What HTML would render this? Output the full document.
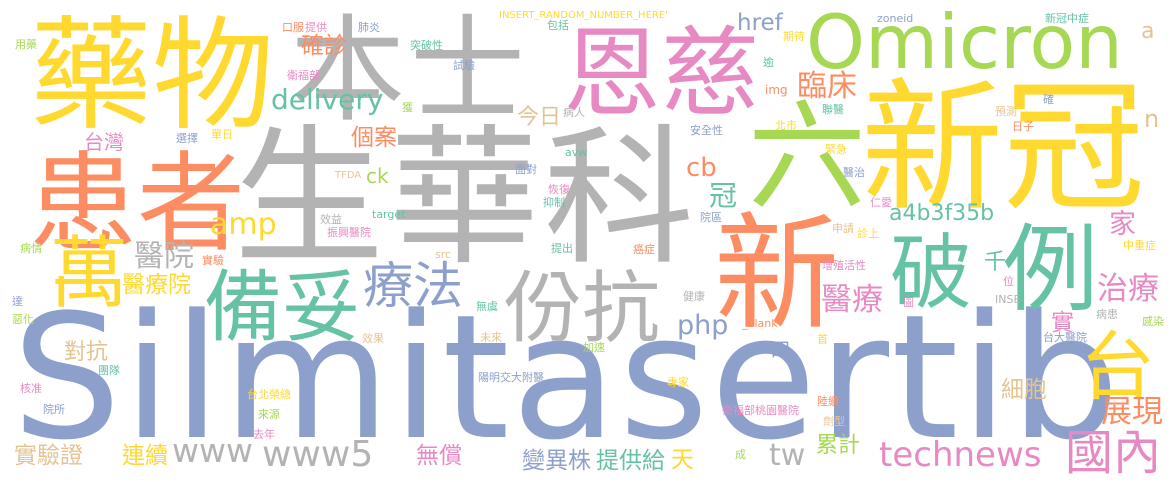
<!DOCTYPE html>
<html><head><meta charset="utf-8"><style>
html,body{margin:0;padding:0;background:#fff;}
#c{position:relative;width:1175px;height:482px;overflow:hidden;background:#fff;}
.w{position:absolute;line-height:1;white-space:nowrap;font-family:"Noto Sans CJK TC","Liberation Sans",sans-serif;}
.l{font-family:"DejaVu Sans","Liberation Sans",sans-serif;}
.s{font-size:11px;}
.G{color:#66c2a5}.O{color:#fc8d62}.B{color:#8da0cb}.P{color:#e78ac3}.L{color:#a6d854}.Y{color:#ffd92f}.T{color:#e5c494}.R{color:#b3b3b3}
</style></head><body><div id="c">
<span class="w R" style="left:234px;top:111px;font-size:150px;letter-spacing:5px">生華科</span>
<span class="w l B" style="left:12px;top:292px;font-size:172px;letter-spacing:2px">Silmitasertib</span>
<span class="w Y" style="left:30px;top:5px;font-size:122px">藥物</span>
<span class="w R" style="left:290px;top:4px;font-size:115px;letter-spacing:5px">本士</span>
<span class="w P" style="left:563px;top:16px;font-size:98px">恩慈</span>
<span class="w l L" style="left:806px;top:5px;font-size:75px">Omicron</span>
<span class="w Y" style="left:861px;top:64px;font-size:142px">新冠</span>
<span class="w L" style="left:748px;top:88px;font-size:118px">六</span>
<span class="w O" style="left:714px;top:200px;font-size:125px">新</span>
<span class="w O" style="left:29px;top:141px;font-size:108px">患者</span>
<span class="w Y" style="left:50px;top:228px;font-size:78px">萬</span>
<span class="w G" style="left:204px;top:262px;font-size:78px">備妥</span>
<span class="w B" style="left:363px;top:257px;font-size:50px">療法</span>
<span class="w R" style="left:504px;top:263px;font-size:78px">份抗</span>
<span class="w G" style="left:890px;top:225px;font-size:82px">破</span>
<span class="w G" style="left:1003px;top:214px;font-size:95px">例</span>
<span class="w Y" style="left:1080px;top:323px;font-size:75px">台</span>
<span class="w P" style="left:1065px;top:424px;font-size:48px">國內</span>
<span class="w O" style="left:1101px;top:393px;font-size:31px">展現</span>
<span class="w P" style="left:1097px;top:270px;font-size:31px">治療</span>
<span class="w P" style="left:821px;top:281px;font-size:31px">醫療</span>
<span class="w P" style="left:1109px;top:208px;font-size:27px">家</span>
<span class="w G" style="left:984px;top:249px;font-size:22px">千</span>
<span class="w P" style="left:1051px;top:309px;font-size:23px">實</span>
<span class="w T" style="left:1001px;top:376px;font-size:23px">細胞</span>
<span class="w L" style="left:816px;top:432px;font-size:22px">累計</span>
<span class="w O" style="left:797px;top:68px;font-size:30px">臨床</span>
<span class="w O" style="left:351px;top:124px;font-size:23px">個案</span>
<span class="w O" style="left:301px;top:32px;font-size:23px">確診</span>
<span class="w P" style="left:84px;top:131px;font-size:20px">台灣</span>
<span class="w R" style="left:134px;top:238px;font-size:30px">醫院</span>
<span class="w Y" style="left:122px;top:271px;font-size:23px">醫療院</span>
<span class="w T" style="left:64px;top:339px;font-size:22px">對抗</span>
<span class="w T" style="left:14px;top:442px;font-size:23px">實驗證</span>
<span class="w Y" style="left:122px;top:442px;font-size:23px">連續</span>
<span class="w T" style="left:517px;top:104px;font-size:22px">今日</span>
<span class="w G" style="left:709px;top:180px;font-size:28px">冠</span>
<span class="w P" style="left:416px;top:442px;font-size:23px">無償</span>
<span class="w B" style="left:522px;top:447px;font-size:23px">變異株</span>
<span class="w G" style="left:596px;top:447px;font-size:23px">提供給</span>
<span class="w Y" style="left:671px;top:446px;font-size:23px">天</span>
<span class="w B" style="left:771px;top:339px;font-size:19px">四</span>
<span class="w l P" style="left:879px;top:438px;font-size:34px">technews</span>
<span class="w l G" style="left:889px;top:203px;font-size:22px">a4b3f35b</span>
<span class="w l G" style="left:271px;top:86px;font-size:28px">delivery</span>
<span class="w l Y" style="left:210px;top:210px;font-size:30px">amp</span>
<span class="w l O" style="left:686px;top:155px;font-size:26px">cb</span>
<span class="w l B" style="left:737px;top:12px;font-size:23px">href</span>
<span class="w l L" style="left:366px;top:166px;font-size:20px">ck</span>
<span class="w l B" style="left:677px;top:312px;font-size:27px">php</span>
<span class="w l R" style="left:769px;top:441px;font-size:30px">tw</span>
<span class="w l R" style="left:172px;top:434px;font-size:33px">www</span>
<span class="w l R" style="left:262px;top:437px;font-size:36px">www5</span>
<span class="w l T" style="left:1141px;top:21px;font-size:22px">a</span>
<span class="w l T" style="left:1144px;top:107px;font-size:24px">n</span>
<span class="w s L" style="left:15px;top:39px">用藥</span>
<span class="w s O" style="left:282px;top:22px">口服</span>
<span class="w s P" style="left:305px;top:22px">提供</span>
<span class="w s B" style="left:358px;top:22px">肺炎</span>
<span class="w s P" style="left:287px;top:70px">衛福部</span>
<span class="w s B" style="left:176px;top:133px">選擇</span>
<span class="w s Y" style="left:211px;top:129px">單日</span>
<span class="w s l T" style="left:335px;top:171px;font-size:10px">TFDA</span>
<span class="w l Y" style="left:499px;top:11px;font-size:10px">INSERT_RANDOM_NUMBER_HERE'</span>
<span class="w s G" style="left:547px;top:20px">包括</span>
<span class="w s Y" style="left:783px;top:31px">期待</span>
<span class="w s G" style="left:410px;top:40px">突破性</span>
<span class="w s B" style="left:453px;top:60px">試驗</span>
<span class="w s G" style="left:763px;top:57px">逾</span>
<span class="w l O" style="left:765px;top:84px;font-size:12px">img</span>
<span class="w s L" style="left:402px;top:102px">獲</span>
<span class="w s R" style="left:563px;top:107px">病人</span>
<span class="w s Y" style="left:775px;top:120px">北市</span>
<span class="w s B" style="left:690px;top:125px">安全性</span>
<span class="w l G" style="left:565px;top:147px;font-size:11px">avw</span>
<span class="w s B" style="left:515px;top:164px">面對</span>
<span class="w s P" style="left:548px;top:184px">恢復</span>
<span class="w s G" style="left:543px;top:197px">抑制</span>
<span class="w s B" style="left:700px;top:212px">院區</span>
<span class="w l G" style="left:372px;top:209px;font-size:11px">target</span>
<span class="w s R" style="left:320px;top:214px">效益</span>
<span class="w s P" style="left:327px;top:227px">振興醫院</span>
<span class="w s L" style="left:20px;top:243px">病情</span>
<span class="w s O" style="left:202px;top:255px">實驗</span>
<span class="w s B" style="left:12px;top:296px">達</span>
<span class="w s L" style="left:12px;top:314px">惡化</span>
<span class="w s T" style="left:362px;top:333px">效果</span>
<span class="w s G" style="left:98px;top:365px">團隊</span>
<span class="w s P" style="left:20px;top:383px">核准</span>
<span class="w s B" style="left:43px;top:404px">院所</span>
<span class="w s Y" style="left:247px;top:389px">台北榮總</span>
<span class="w s L" style="left:258px;top:409px">來源</span>
<span class="w s P" style="left:253px;top:429px">去年</span>
<span class="w l T" style="left:435px;top:249px;font-size:11px">src</span>
<span class="w s G" style="left:551px;top:243px">提出</span>
<span class="w s O" style="left:633px;top:244px">癌症</span>
<span class="w s G" style="left:476px;top:301px">無虞</span>
<span class="w s R" style="left:683px;top:291px">健康</span>
<span class="w l O" style="left:742px;top:318px;font-size:11px">_blank'</span>
<span class="w s T" style="left:480px;top:332px">未來</span>
<span class="w s L" style="left:583px;top:342px">加速</span>
<span class="w s B" style="left:478px;top:372px">陽明交大附醫</span>
<span class="w s Y" style="left:667px;top:377px">專家</span>
<span class="w s P" style="left:722px;top:405px">衛福部桃園醫院</span>
<span class="w s L" style="left:735px;top:449px">成</span>
<span class="w l B" style="left:877px;top:13px;font-size:11px">zoneid</span>
<span class="w s G" style="left:1045px;top:13px">新冠中症</span>
<span class="w s B" style="left:1043px;top:94px">確</span>
<span class="w s T" style="left:995px;top:106px">預測</span>
<span class="w s O" style="left:1012px;top:121px">日子</span>
<span class="w s G" style="left:822px;top:104px">聯醫</span>
<span class="w s Y" style="left:825px;top:144px">緊急</span>
<span class="w s B" style="left:843px;top:167px">醫治</span>
<span class="w s P" style="left:870px;top:197px">仁愛</span>
<span class="w s T" style="left:832px;top:223px">申請</span>
<span class="w s Y" style="left:857px;top:228px">診上</span>
<span class="w s Y" style="left:1123px;top:240px">中重症</span>
<span class="w s P" style="left:822px;top:260px">增殖活性</span>
<span class="w s P" style="left:1003px;top:276px">位</span>
<span class="w s P" style="left:903px;top:297px">圖</span>
<span class="w l R" style="left:995px;top:294px;font-size:11px">INSE</span>
<span class="w s R" style="left:1096px;top:309px">病患</span>
<span class="w s L" style="left:1142px;top:316px">感染</span>
<span class="w s B" style="left:1043px;top:332px">台大醫院</span>
<span class="w s Y" style="left:817px;top:334px">首</span>
<span class="w s O" style="left:817px;top:396px">陸續</span>
<span class="w s T" style="left:823px;top:416px">劑型</span>
</div></body></html>
